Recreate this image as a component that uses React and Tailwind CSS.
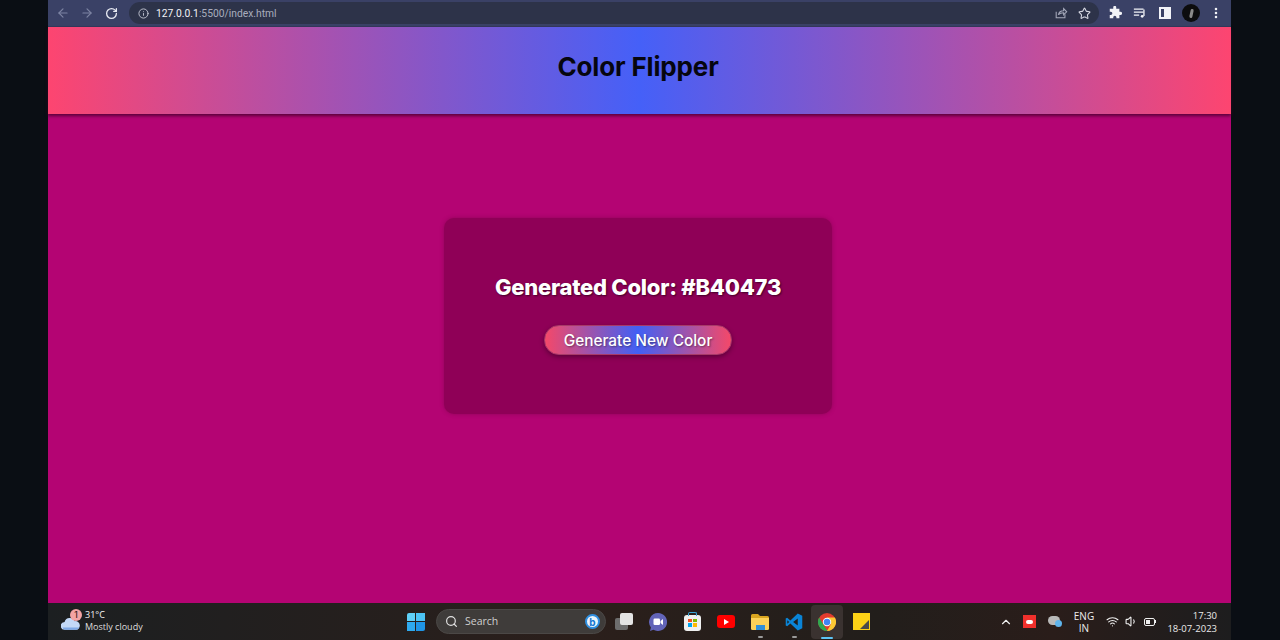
import React from 'react';
import { ArrowLeft, ArrowRight, RotateCw, Info, Star, Search, ChevronUp, Wifi, Volume1, MoreVertical } from 'lucide-react';

const uiFont = "font-['Inter','Noto_Sans',sans-serif]";

const BrowserBar = () => (
    <div className="h-[27px] bg-[#3a4166] flex items-center border-b border-[#343a5c]">
        <div className="flex items-center w-[81px] pl-[8px] gap-[10px] shrink-0">
            <ArrowLeft className="w-[14px] h-[14px] text-[#7d84a3]" strokeWidth={2} />
            <ArrowRight className="w-[14px] h-[14px] text-[#7d84a3]" strokeWidth={2} />
            <RotateCw className="w-[13px] h-[13px] text-[#e8eaf2] ml-[1px]" strokeWidth={2.4} />
        </div>
        <div className="h-[22px] w-[970px] bg-[#2d3349] rounded-full flex items-center pl-[9px] pr-[8px] shrink-0">
            <Info className="w-[11px] h-[11px] text-[#c5c8d4] shrink-0" strokeWidth={2} />
            <div className="ml-[7px] pt-[1px] text-[10.3px] font-['Roboto',sans-serif] text-[#a9adbd] whitespace-nowrap">
                <span className="text-[#f1f2f6]">127.0.0.1</span>:5500/index.html
            </div>
            <div className="ml-auto flex items-center gap-[10px]">
                <svg viewBox="0 0 16 16" className="w-[14px] h-[14px]" fill="none" stroke="#a6aabb" strokeWidth="1.2">
                    <path d="M2.5 6.5v7h10v-4" />
                    <path d="M5 10c.6-3 3-4.6 6-4.6V3l3.5 3.6L11 10V7.6c-2.5 0-4.6.6-6 2.4z" />
                </svg>
                <Star className="w-[13px] h-[13px] text-[#d6d8e2]" strokeWidth={2} />
            </div>
        </div>
        <div className="flex items-center ml-[10px] gap-[11px] shrink-0">
            <svg viewBox="0 0 16 16" className="w-[14px] h-[14px] -ml-[1px]" fill="#f2f3f7">
                <path d="M6 1.5a1.7 1.7 0 0 1 3.4 0V3h3.6v3.6h1.2a1.9 1.9 0 0 1 0 3.8H13V14H9.6v-1.2a1.8 1.8 0 0 0-3.6 0V14H2v-3.8h1.2a1.8 1.8 0 0 0 0-3.6H2V3h4z" />
            </svg>
            <svg viewBox="0 0 16 16" className="w-[14px] h-[14px]" fill="none" stroke="#f2f3f7" strokeWidth="1.5">
                <path d="M1 3.5h11M1 7h11M1 10.5h6" />
                <path d="M12.5 4v7.5" />
                <circle cx="10.5" cy="11.8" r="1.6" fill="#f2f3f7" stroke="none" />
            </svg>
            <div className="w-[12px] h-[12px] border-2 border-[#f2f3f7] flex justify-end ml-[1px]">
                <div className="w-[5px] h-full bg-[#f2f3f7]" />
            </div>
            <div className="w-[18px] h-[18px] rounded-full bg-[#0c0c0e] flex items-center justify-center">
                <div className="w-[3px] h-[9px] rounded-full bg-[#8a8a8a] rotate-12" />
            </div>
            <MoreVertical className="w-[14px] h-[14px] text-[#f2f3f7] -ml-[2px]" strokeWidth={2.4} />
        </div>
    </div>
);

const Header = () => (
    <header className="h-[87px] shrink-0 bg-[linear-gradient(90deg,#fd4570,#4560f8,#fd4570)] shadow-[0_2px_3px_rgba(60,0,40,0.75)] relative pt-[23px] pr-[3px]">
        <h1 className="text-center text-[26px] leading-[34px] font-bold text-[#06060f] font-['Inter',sans-serif] tracking-[-0.15px]">Color Flipper</h1>
    </header>
);

const Card = () => (
    <div className="w-[388px] h-[196px] bg-[#8f0057] rounded-[10px] shadow-[0_0_4px_rgba(90,0,50,0.4)] flex flex-col items-center pt-[55px]">
        <h2 className="text-[22px] leading-[28px] font-extrabold text-white font-['Inter',sans-serif] tracking-[-0.25px] [text-shadow:1px_1px_2px_rgba(0,0,0,0.55)] whitespace-nowrap">
            Generated Color: #B40473
        </h2>
        <button className="mt-[24px] w-[188px] h-[30px] pt-[1px] rounded-full bg-[linear-gradient(90deg,#f44869,#4160f5,#f44869)] border border-[#a83a68] shadow-[0_2px_5px_rgba(0,0,0,0.35)] text-[15.4px] font-medium text-white font-['Inter',sans-serif] [text-shadow:1px_1px_2px_rgba(0,0,0,0.4)] whitespace-nowrap">
            Generate New Color
        </button>
    </div>
);

const WindowsLogo = () => (
    <div className="grid grid-cols-2 gap-[1px] w-[18px] h-[18px]">
        <div className="bg-[#5fd0f7] rounded-tl-[2px]" />
        <div className="bg-[#4cc4f5]" />
        <div className="bg-[#2ea9ee]" />
        <div className="bg-[#1f95e6] rounded-br-[2px]" />
    </div>
);

const TaskIcons = () => (
    <div className="flex items-center">
        <div className="w-[34px] h-[30px] flex items-center justify-center">
            {/* task view */}
            <div className="relative w-[18px] h-[17px]">
                <div className="absolute left-0 bottom-0 w-[13px] h-[12px] bg-[#6d6d6d] rounded-[2px]" />
                <div className="absolute right-0 top-0 w-[13px] h-[12px] bg-[#e4e4e4] rounded-[2px]" />
            </div>
        </div>
        <div className="w-[34px] h-[30px] flex items-center justify-center">
            <svg viewBox="0 0 18 18" className="w-[18px] h-[18px]">
                <path d="M9 0a9 9 0 1 1-4.6 16.7L1 18l.9-3.6A9 9 0 0 1 9 0z" fill="#6264b8" />
                <rect x="4.5" y="5.5" width="6.5" height="6.5" rx="1.2" fill="#fff" />
                <path d="M11.5 8 14 6v6l-2.5-2z" fill="#fff" />
            </svg>
        </div>
        <div className="w-[34px] h-[30px] flex items-center justify-center">
            <div className="relative w-[17px] h-[16px] mt-[2px] bg-[#f0f0f0] rounded-[3px] grid grid-cols-2 gap-[1px] p-[4px]">
                <div className="absolute left-[4px] top-[-3px] w-[9px] h-[4px] border border-b-0 border-[#39a6d8] rounded-t-[2px]" />
                <div className="bg-[#f25022]" />
                <div className="bg-[#7fba00]" />
                <div className="bg-[#00a4ef]" />
                <div className="bg-[#ffb900]" />
            </div>
        </div>
        <div className="w-[34px] h-[30px] flex items-center justify-center">
            <div className="w-[18px] h-[13px] bg-[#f00] rounded-[3px] flex items-center justify-center">
                <div className="w-0 h-0 border-y-[3px] border-y-transparent border-l-[5px] border-l-white" />
            </div>
        </div>
        <div className="w-[34px] h-[30px] flex flex-col items-center justify-center relative">
            <svg viewBox="0 0 18 16" className="w-[18px] h-[16px]">
                <path d="M0 1.5A1.5 1.5 0 0 1 1.5 0H7l2 2h7.5A1.5 1.5 0 0 1 18 3.5V6H0z" fill="#d9a520" />
                <path d="M0 4h18v10.5a1.5 1.5 0 0 1-1.5 1.5h-15A1.5 1.5 0 0 1 0 14.5z" fill="#fcd158" />
                <rect x="5" y="11" width="9" height="5" fill="#2f8fd8" />
            </svg>
            <div className="absolute bottom-[-1px] w-[5px] h-[2px] rounded-full bg-[#9a9a9a]" />
        </div>
        <div className="w-[34px] h-[30px] flex items-center justify-center relative">
            <svg viewBox="0 0 100 100" className="w-[18px] h-[18px]">
                <path d="M71 3 30 41 12 27 4 31v38l8 4 18-14 41 38 25-12V15z" fill="#0a84d6" />
                <path d="M71 31 45 50l26 19z" fill="#1f1d1c" />
                <path d="M13 40v20l10-10z" fill="#1f1d1c" />
            </svg>
            <div className="absolute bottom-[-1px] w-[5px] h-[2px] rounded-full bg-[#9a9a9a]" />
        </div>
        <div className="w-[32px] h-[34px] rounded-[4px] bg-[#3a3230] flex items-center justify-center relative">
            <svg viewBox="0 0 32 32" className="w-[18px] h-[18px]">
                <circle cx="16" cy="16" r="16" fill="#e33b2e" />
                <path d="M16 32A16 16 0 0 1 2.1 8L10 21.5 17 32z" fill="#2fa84f" />
                <path d="M16 8h13.9A16 16 0 0 1 16 32l7-12z" fill="#fcc934" />
                <circle cx="16" cy="16" r="7.5" fill="#fff" />
                <circle cx="16" cy="16" r="5.8" fill="#4285f4" />
            </svg>
            <div className="absolute bottom-0 w-[12px] h-[2px] rounded-full bg-[#5cc4f5]" />
        </div>
        <div className="w-[37px] h-[30px] flex items-center justify-center">
            <div className="w-[17px] h-[17px] bg-[#fcd116] relative overflow-hidden">
                <div className="absolute right-[1px] bottom-[1px] w-[9px] h-[9px] bg-[#4a4a4a] [clip-path:polygon(100%_0,100%_100%,0_100%)]" />
            </div>
        </div>
    </div>
);

const Taskbar = () => (
    <footer className={`h-[37px] shrink-0 bg-[#1f1d1c] bg-[linear-gradient(90deg,#1c1f21,#2b1f1b_45%,#221e1b_70%,#2a1d1a_85%,#1d1d1e)] flex items-center ${uiFont}`}>
        <div className="w-[358px] shrink-0 flex items-center pl-[12px]">
            <div className="relative w-[23px] h-[24px] shrink-0">
                <svg viewBox="0 0 24 16" className="absolute left-[1px] bottom-[4px] w-[19px] h-[13px]">
                    <path d="M5 16a5 5 0 0 1-.5-10A7 7 0 0 1 17.5 5 5.5 5.5 0 0 1 19 16z" fill="#c3d9f7" />
                    <path d="M5 16a4 4 0 0 1-3-3h21a5 5 0 0 1-4 3z" fill="#7fa9e6" />
                </svg>
                <div className="absolute right-[1px] top-[-1px] w-[12px] h-[12px] rounded-full bg-[#f3a3a3] text-[8.5px] leading-[12px] text-center text-[#3a1c1c] font-medium">1</div>
            </div>
            <div className="ml-[2px] mb-[2px] text-[9px] leading-[12px] text-[#f5f5f5] font-['Open_Sans',sans-serif] whitespace-nowrap">
                <div>31°C</div>
                <div className="text-[#dedede]">Mostly cloudy</div>
            </div>
        </div>
        <div className="w-[27px] shrink-0 flex justify-center -ml-[4px] mr-[1px]">
            <WindowsLogo />
        </div>
        <div className="ml-[6px] w-[170px] h-[25px] shrink-0 rounded-full bg-[#3f3c3a] border border-[#4b4846] flex items-center pl-[8px] pr-[5px]">
            <Search className="w-[13px] h-[13px] text-[#e2e2e2]" strokeWidth={2.2} />
            <span className="ml-[7px] text-[10.5px] text-[#cfcfcf] font-['Open_Sans',sans-serif]">Search</span>
            <div className="ml-auto w-[15px] h-[15px] rounded-full bg-[#e9f4fb] border-2 border-[#2f8fe0] flex items-center justify-center text-[10px] leading-none font-bold text-[#1677d2]">b</div>
        </div>
        <div className="ml-[1px] shrink-0">
            <TaskIcons />
        </div>
        <div className="ml-auto flex items-center pr-[14px] shrink-0">
            <ChevronUp className="w-[14px] h-[14px] text-[#f0f0f0]" strokeWidth={2} />
            <div className="ml-[10px] w-[13px] h-[13px] bg-[#f0302c] flex items-center justify-center">
                <div className="w-[7px] h-[4px] rounded-full bg-[#fff]" />
            </div>
            <div className="ml-[12px] relative w-[14px] h-[11px]">
                <div className="absolute left-0 top-0 w-[12px] h-[9px] rounded-full bg-[#b9b9b9]" />
                <div className="absolute right-0 bottom-0 w-[7px] h-[7px] rounded-full bg-[#5fb4ec]" />
            </div>
            <div className="ml-[10px] w-[24px] text-center text-[10px] leading-[12px] text-[#ececec] font-['Open_Sans',sans-serif]">
                <div>ENG</div>
                <div>IN</div>
            </div>
            <Wifi className="ml-[10px] w-[13px] h-[13px] text-[#f0f0f0]" strokeWidth={2} />
            <Volume1 className="ml-[6px] w-[13px] h-[13px] text-[#f0f0f0]" strokeWidth={2} />
            <div className="ml-[6px] w-[11px] h-[8px] border border-[#f0f0f0] rounded-[2px] flex p-[1px]">
                <div className="w-[4px] bg-[#f0f0f0]" />
            </div>
            <div className="w-[1px] h-[3px] bg-[#f0f0f0]" />
            <div className="ml-[11px] w-[50px] text-right text-[9.5px] leading-[13px] text-[#ececec] font-['Open_Sans',sans-serif] whitespace-nowrap">
                <div>17:30</div>
                <div>18-07-2023</div>
            </div>
        </div>
    </footer>
);

const App = () => {
    return (
        <div className="w-[1280px] h-[640px] flex bg-[#0a0e14] overflow-hidden">
            <div className="w-[48px] shrink-0" />
            <div className="w-[1183px] shrink-0 flex flex-col">
                <BrowserBar />
                <Header />
                <main className="flex-1 bg-[#b40473] flex justify-center pt-[104px] pr-[3px]">
                    <Card />
                </main>
                <Taskbar />
            </div>
            <div className="flex-1" />
        </div>
    );
};

export default App;
